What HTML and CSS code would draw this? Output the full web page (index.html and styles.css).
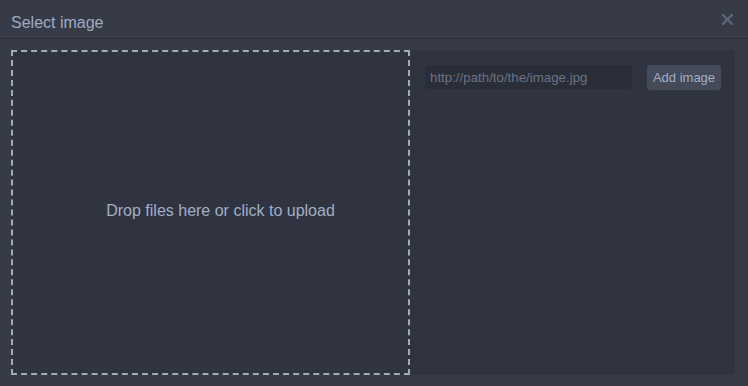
FILE: index.html
```html
<!DOCTYPE html>
<html>
<head>
<meta charset="utf-8">
<link rel="stylesheet" href="styles.css">
</head>
<body>
<div class="dialog">
  <div class="header">
    <span class="title">Select image</span>
    <span class="close">
      <svg width="11" height="11" viewBox="0 0 11 11"><path d="M1 1L10 10M10 1L1 10" stroke="#5c6478" stroke-width="2.4" stroke-linecap="square"/></svg>
    </span>
  </div>
  <div class="content">
    <div class="panel">
      <div class="dropzone"><span class="drop-text">Drop files here or click to upload</span></div>
      <div class="side">
        <input class="url" type="text" placeholder="http://path/to/the/image.jpg">
        <button class="add">Add image</button>
      </div>
    </div>
  </div>
</div>
</body>
</html>
```
FILE: styles.css
```css
html, body {
  margin: 0;
  padding: 0;
  background: #363b47;
  font-family: "Liberation Sans", Arial, sans-serif;
}
.dialog {
  width: 748px;
  height: 386px;
  display: flex;
  flex-direction: column;
}
.header {
  height: 38px;
  border-bottom: 1px solid #2a2e38;
  display: flex;
  align-items: center;
  justify-content: space-between;
  padding: 0 15px 0 11px;
  box-sizing: content-box;
}
.title {
  font-size: 16px;
  color: #a0abc2;
  padding-top: 8px;
}
.close {
  display: flex;
  width: 11px;
  height: 11px;
}
.content {
  flex: 1;
  padding: 11px 13px 11px 11px;
  display: flex;
}
.panel {
  flex: 1;
  background: #2f3440;
  border-radius: 3px;
  display: flex;
}
.dropzone {
  width: 395px;
  border: 2px dashed #a3abbb;
  display: flex;
  align-items: center;
  justify-content: center;
  font-size: 16px;
  color: #a3aec5;
}
.drop-text {
  margin: 0 0 4px 20px;
}
.side {
  flex: 1;
  display: flex;
  align-items: flex-start;
  padding: 15px 14px 0 15px;
  gap: 15px;
}
.url {
  width: 207px;
  height: 24px;
  box-sizing: border-box;
  border: none;
  outline: none;
  background: #2a2e38;
  border-radius: 2px;
  padding: 0 5px;
  font-family: "Liberation Sans", Arial, sans-serif;
  font-size: 13.3px;
  color: #a3aec5;
}
.url::placeholder {
  color: #6c7382;
}
.add {
  width: 74px;
  height: 25px;
  border: none;
  background: #444a58;
  border-radius: 3px;
  padding: 0;
  font-family: "Liberation Sans", Arial, sans-serif;
  font-size: 13px;
  color: #a3aec5;
}
```
